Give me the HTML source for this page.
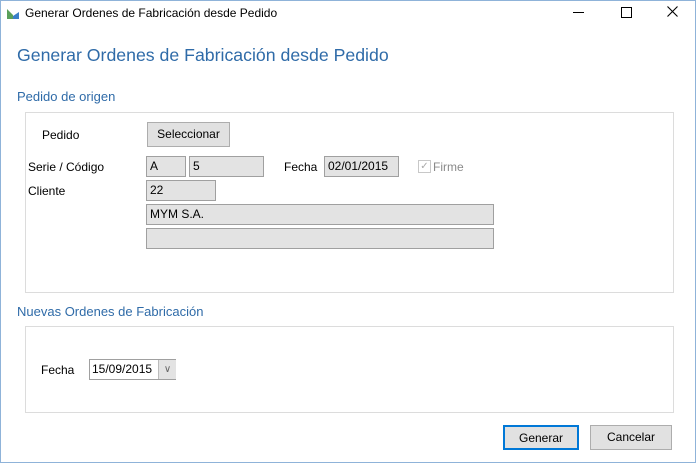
<html><head><style>
body{margin:0;width:696px;height:463px;background:#fff;font-family:"Liberation Sans",sans-serif;font-size:12px;color:#000;position:relative;overflow:hidden}
.a{position:absolute}
.tb{position:absolute;background:#e3e3e3;border:1px solid #a0a0a0;box-sizing:border-box;padding:2px 0 0 3px;font-size:12px}
.btn{position:absolute;background:#e1e1e1;border:1px solid #adadad;box-sizing:border-box;text-align:center;font-size:12px}
.grp{position:absolute;border:1px solid #dcdcdc;box-sizing:border-box}
</style></head><body>
<div class="a" style="left:0;top:0;width:694px;height:461px;border:1px solid #8fb3d9"></div>
<svg class="a" style="left:6px;top:8px" width="14" height="12"><path d="M1 11V1L7 7V11Z" fill="#5aa05a"/><path d="M7 8L13 4V11H7Z" fill="#3a7fc8"/></svg>
<div class="a" style="left:25px;top:6px;font-size:12px">Generar Ordenes de Fabricación desde Pedido</div>
<div class="a" style="left:573px;top:12px;width:11px;height:1px;background:#000"></div>
<div class="a" style="left:621px;top:7px;width:9px;height:9px;border:1px solid #000"></div>
<svg class="a" style="left:667px;top:6px" width="11" height="11"><path d="M0.5 0.5L10.5 10.5M10.5 0.5L0.5 10.5" stroke="#000" stroke-width="1.1"/></svg>
<div class="a" style="left:17px;top:45px;font-size:17.7px;color:#2f6ba8">Generar Ordenes de Fabricación desde Pedido</div>
<div class="a" style="left:17px;top:89px;font-size:13px;color:#2f6ba8">Pedido de origen</div>
<div class="grp" style="left:25px;top:112px;width:649px;height:181px"></div>
<div class="a" style="left:42px;top:128px">Pedido</div>
<div class="btn" style="left:147px;top:122px;width:83px;height:25px;line-height:23px">Seleccionar</div>
<div class="a" style="left:28px;top:160px">Serie / Código</div>
<div class="tb" style="left:146px;top:156px;width:40px;height:21px">A</div>
<div class="tb" style="left:189px;top:156px;width:75px;height:21px">5</div>
<div class="a" style="left:284px;top:160px">Fecha</div>
<div class="tb" style="left:324px;top:156px;width:75px;height:21px">02/01/2015</div>
<div class="a" style="left:418px;top:160px;width:11px;height:11px;border:1px solid #c8c8c8;color:#aaa;font-size:10px;line-height:11px;text-align:center">&#10003;</div>
<div class="a" style="left:433px;top:160px;color:#8a8a8a">Firme</div>
<div class="a" style="left:28px;top:184px">Cliente</div>
<div class="tb" style="left:146px;top:180px;width:70px;height:21px">22</div>
<div class="tb" style="left:146px;top:204px;width:348px;height:21px">MYM S.A.</div>
<div class="tb" style="left:146px;top:228px;width:348px;height:21px"></div>
<div class="a" style="left:17px;top:304px;font-size:13px;color:#2f6ba8">Nuevas Ordenes de Fabricación</div>
<div class="grp" style="left:25px;top:326px;width:649px;height:87px"></div>
<div class="a" style="left:41px;top:363px">Fecha</div>
<div class="a" style="left:89px;top:359px;width:87px;height:21px;border:1px solid #a0a0a0;box-sizing:border-box;background:#fff;padding:2px 0 0 2px">15/09/2015</div>
<div class="a" style="left:158px;top:360px;width:17px;height:19px;background:#e3e3e3;border-left:1px solid #bbb;text-align:center;color:#666;font-size:10px;line-height:19px">&#8744;</div>
<div class="btn" style="left:503px;top:425px;width:76px;height:25px;line-height:22px;border:2px solid #0078d7">Generar</div>
<div class="btn" style="left:590px;top:425px;width:82px;height:25px;line-height:23px">Cancelar</div>
</body></html>
